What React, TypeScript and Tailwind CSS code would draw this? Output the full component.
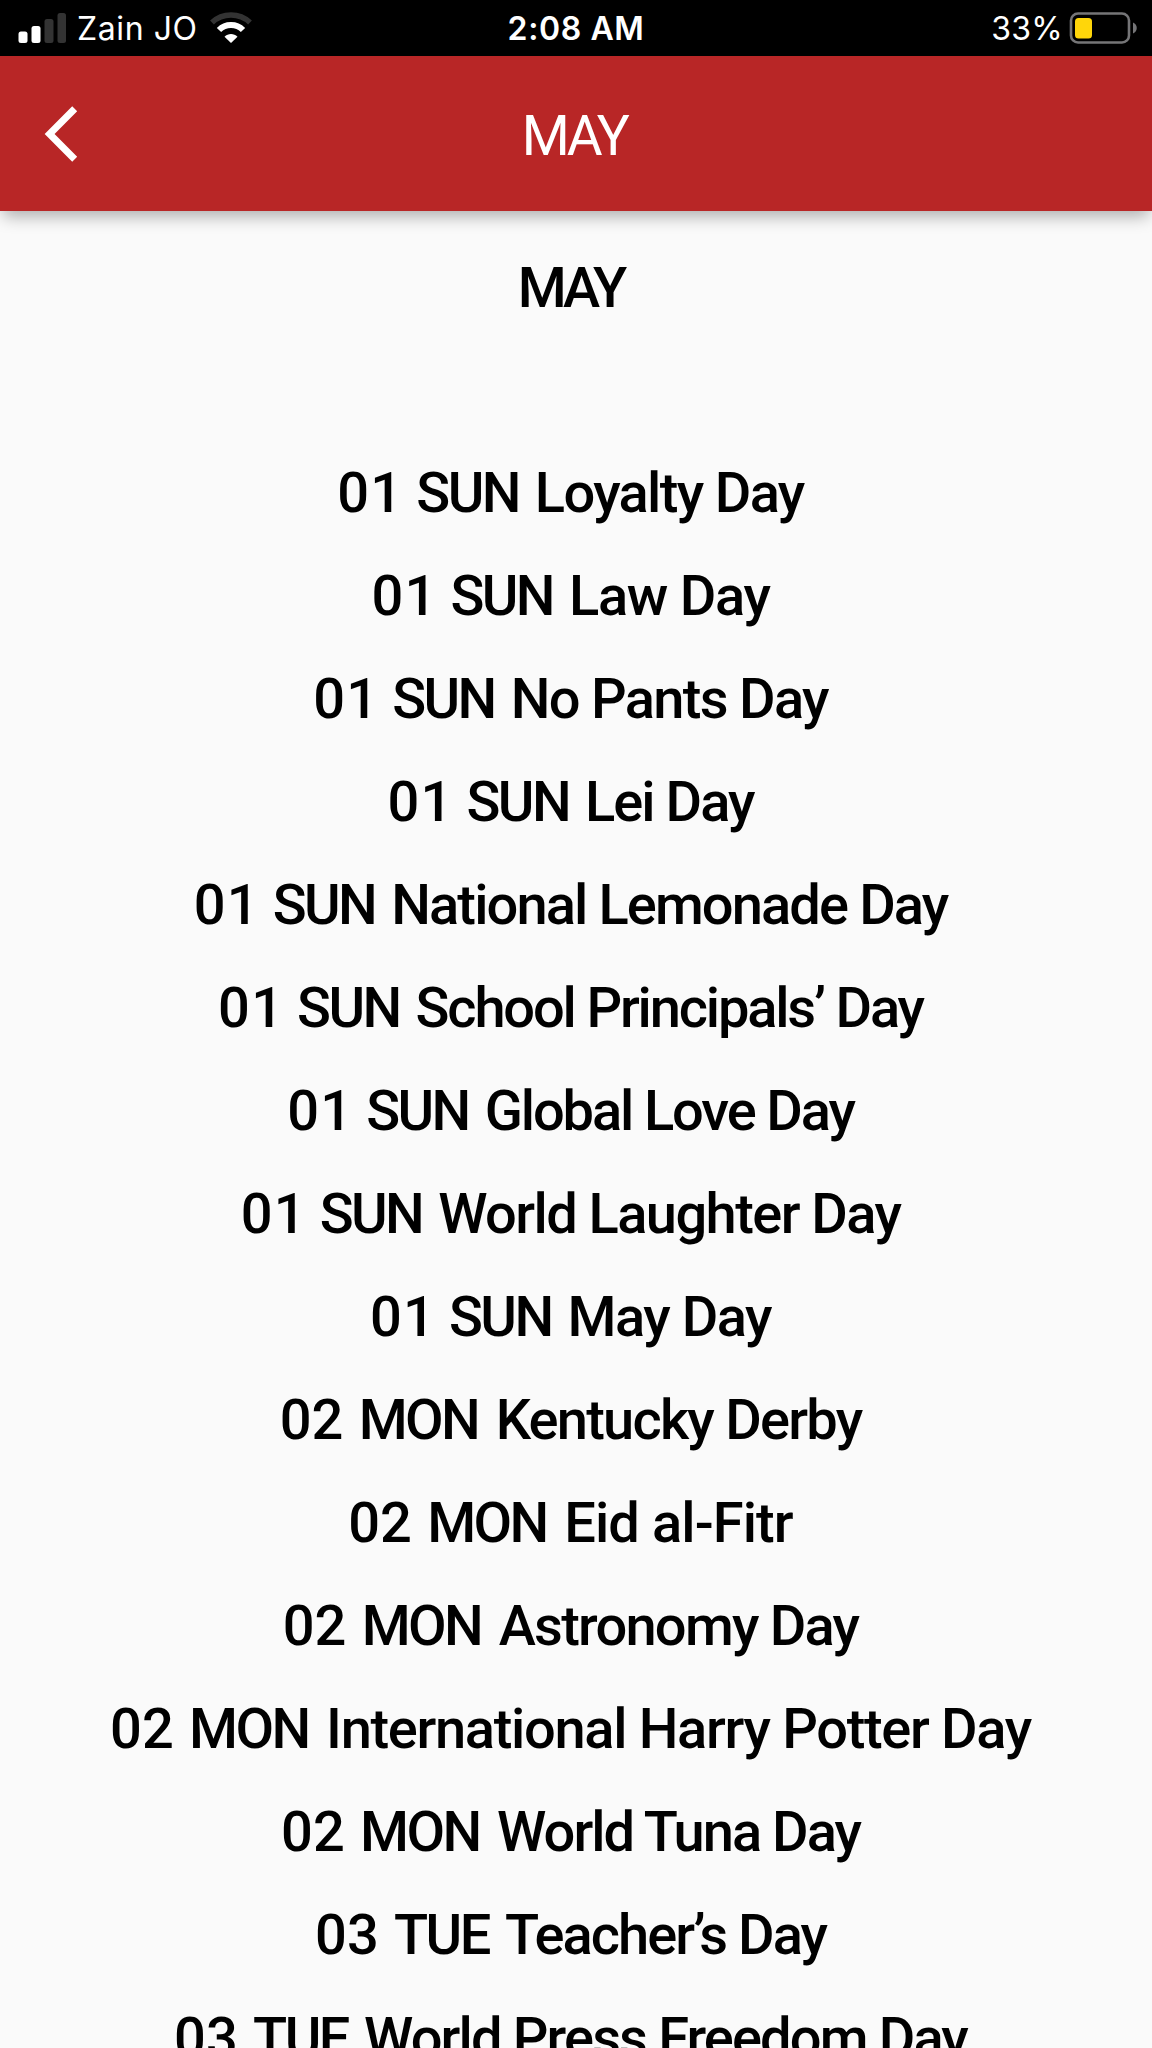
type Holiday = {
    date: string;
    day: "SUN" | "MON" | "TUE";
    name: string;
    tracking: string;
};

const holidays: Holiday[] = [
    { date: "01", day: "SUN", name: "Loyalty Day", tracking: "tracking-[-1.64px]" },
    { date: "01", day: "SUN", name: "Law Day", tracking: "tracking-[-1.3px]" },
    { date: "01", day: "SUN", name: "No Pants Day", tracking: "tracking-[-1.7px]" },
    { date: "01", day: "SUN", name: "Lei Day", tracking: "tracking-[-1.97px]" },
    { date: "01", day: "SUN", name: "National Lemonade Day", tracking: "tracking-[-1.88px]" },
    { date: "01", day: "SUN", name: "School Principals’ Day", tracking: "tracking-[-2.17px]" },
    { date: "01", day: "SUN", name: "Global Love Day", tracking: "tracking-[-2.12px]" },
    { date: "01", day: "SUN", name: "World Laughter Day", tracking: "tracking-[-1.56px]" },
    { date: "01", day: "SUN", name: "May Day", tracking: "tracking-[-1.5px]" },
    { date: "02", day: "MON", name: "Kentucky Derby", tracking: "tracking-[-1.76px]" },
    { date: "02", day: "MON", name: "Eid al-Fitr", tracking: "tracking-[-0.9px]" },
    { date: "02", day: "MON", name: "Astronomy Day", tracking: "tracking-[-1.75px]" },
    { date: "02", day: "MON", name: "International Harry Potter Day", tracking: "tracking-[-1.32px]" },
    { date: "02", day: "MON", name: "World Tuna Day", tracking: "tracking-[-1.98px]" },
    { date: "03", day: "TUE", name: "Teacher’s Day", tracking: "tracking-[-1.98px]" },
    { date: "03", day: "TUE", name: "World Press Freedom Day", tracking: "tracking-[-1.86px]" },
];

const dayWidths = {
    SUN: "w-[118.5px]",
    MON: "w-[137px]",
    TUE: "w-[111px]",
};

const StatusBar: React.FC = () => {
    return (
        <div className="grid h-14 grid-cols-3 items-center bg-black font-['Inter',sans-serif] text-[32px] leading-[54px] text-white">
            <div className="flex items-center pl-[18px]">
                <svg width="48" height="32" viewBox="0 0 48 32" fill="white">
                    <rect x="0.5" y="19.5" width="9" height="11.5" rx="2.5" />
                    <rect x="13.5" y="14" width="9" height="17" rx="2.5" />
                    <rect x="26.5" y="7" width="9" height="24" rx="2.5" fill="#333" />
                    <rect x="39.5" y="1" width="8.5" height="30" rx="2.5" fill="#333" />
                </svg>
                <span className="ml-[11px] w-[122px] pt-[2px] tracking-[0.6px] whitespace-nowrap">Zain JO</span>
                <svg className="ml-[11px]" width="42" height="32" viewBox="0 0 42 32" fill="none">
                    <path d="M2 10.5C12.5 0.5 29.5 0.5 40 10.5" stroke="#333" strokeWidth="5.5" />
                    <path d="M9 18C15.5 11.3 26.5 11.3 33 18" stroke="white" strokeWidth="6" />
                    <path d="M21 31l-6.5-6.3c3.6-3.6 9.4-3.6 13 0z" fill="white" />
                </svg>
            </div>
            <div className="pt-[2px] text-center font-semibold tracking-[0.6px]">2:08 AM</div>
            <div className="flex items-center justify-end pr-[14px]">
                <span className="mr-[6px] pt-[2px] tracking-[0.3px]">33%</span>
                <svg width="69" height="32" viewBox="0 0 69 32" fill="none">
                    <rect x="2" y="1.5" width="58" height="29" rx="7" stroke="#757577" strokeWidth="2.6" />
                    <rect x="6" y="6" width="17" height="20.5" rx="3.5" fill="#ffd60a" />
                    <path d="M64 10.5c5 2 5 9 0 11z" fill="#757577" />
                </svg>
            </div>
        </div>
    );
};

const Header: React.FC = () => {
    return (
        <header className="grid h-[155px] grid-cols-3 items-center bg-[#b82626] text-white shadow-[0_8px_16px_-3px_rgba(0,0,0,0.32)]">
            <button aria-label="Back" className="pl-10">
                <svg width="42" height="60" viewBox="0 0 42 60" fill="none" stroke="white" strokeWidth="7">
                    <path d="M34.7 4.8L9.6 30l25.1 25.2" />
                </svg>
            </button>
            <h1 className="pr-[4px] pt-[5px] text-center text-[55px] tracking-[-3.5px]">MAY</h1>
        </header>
    );
};

export default function App() {
    return (
        <div className="h-[2048px] overflow-hidden bg-[#fafafa] font-['Roboto',sans-serif]">
            <StatusBar />
            <Header />
            <main className="pt-[25.5px] pr-[11px] text-[56px] leading-[102.95px] font-medium text-black">
                <h2 className="mb-[102.95px] text-center tracking-[-4px]">MAY</h2>
                <ul>
                    {holidays.map((holiday) => (
                        <li key={holiday.name} className="flex justify-center whitespace-nowrap">
                            <span className={holiday.date === "01" ? "w-[79px] tracking-[1.2px]" : "w-[79px]"}>{holiday.date}</span>
                            <span className={`${dayWidths[holiday.day]} tracking-[-2.6px]`}>{holiday.day}</span>
                            <span className={holiday.tracking}>{holiday.name}</span>
                        </li>
                    ))}
                </ul>
            </main>
        </div>
    );
}
